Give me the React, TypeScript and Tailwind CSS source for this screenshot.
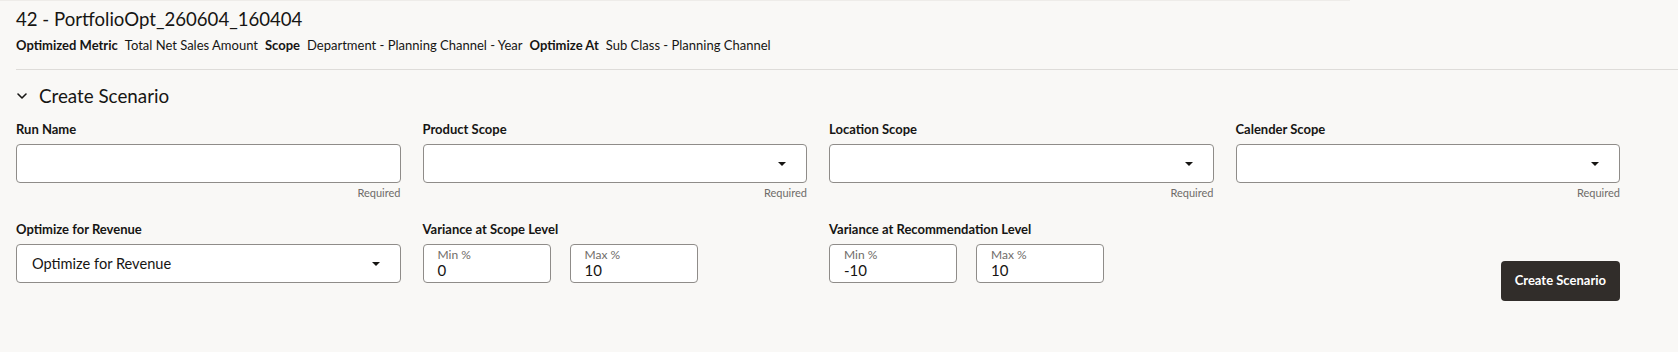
import React from "react";

function Caret() {
  return (
    <svg width="10" height="6" viewBox="0 0 10 6" className="shrink-0">
      <path d="M1 1 L9 1 L5 5 Z" fill="#161513" />
    </svg>
  );
}

function Chevron() {
  return (
    <svg width="12" height="8" viewBox="0 0 12 8" className="shrink-0">
      <path d="M2 2 L6 6 L10 2" fill="none" stroke="#161513" strokeWidth="1.6" strokeLinecap="round" strokeLinejoin="round" />
    </svg>
  );
}

function Label({ children }: { children: React.ReactNode }) {
  return <div className="text-[13px] leading-[16px] font-bold text-[#161513]">{children}</div>;
}

function TextField({ label, select }: { label: string; select?: boolean }) {
  return (
    <div className="flex flex-col">
      <Label>{label}</Label>
      <div className="mt-[7px] h-[39px] rounded-[4px] border border-[#8f8c89] bg-white flex items-center justify-end pr-[19px]">
        {select ? <Caret /> : null}
      </div>
      <div className="mt-[3px] text-right text-[11px] leading-[14px] text-[#6f6c69]">Required</div>
    </div>
  );
}

function RangeBox({ label, value }: { label: string; value: string }) {
  return (
    <div className="w-[128px] h-[39px] rounded-[4px] border border-[#8f8c89] bg-white pl-[14px] flex flex-col justify-center">
      <div className="text-[12px] leading-[14px] text-[#6f6c69]">{label}</div>
      <div className="text-[15px] leading-[17px] text-[#161513]">{value}</div>
    </div>
  );
}

export default function App() {
  return (
    <div className="min-h-[352px] w-full bg-[#f9f8f6] text-[#161513] font-['Lato',sans-serif] relative">
      <div className="absolute top-0 left-0 w-[1350px] h-px bg-[#eeece9]" />
      <div className="pl-4 pt-[7px]">
        <h1 className="text-[18.6px] leading-[24px] font-normal">42 - PortfolioOpt_260604_160404</h1>
        <div className="mt-[5px] text-[13px] leading-[18px] flex items-center">
          <span className="font-bold">Optimized Metric</span>
          <span className="ml-[7px]">Total Net Sales Amount</span>
          <span className="ml-[7px] font-bold">Scope</span>
          <span className="ml-[7px]">Department - Planning Channel - Year</span>
          <span className="ml-[7px] font-bold">Optimize At</span>
          <span className="ml-[7px]">Sub Class - Planning Channel</span>
        </div>
      </div>
      <div className="ml-4 mt-[15px] border-t border-[#dedcd9]" />
      <div className="pl-4 pr-[58px]">
        <div className="mt-[14px] h-[24px] flex items-center gap-[11px]">
          <Chevron />
          <span className="text-[18.8px] leading-[24px] font-normal">Create Scenario</span>
        </div>
        <div className="mt-[13px] grid grid-cols-4 gap-x-[22px]">
          <TextField label="Run Name" />
          <TextField label="Product Scope" select />
          <TextField label="Location Scope" select />
          <TextField label="Calender Scope" select />
        </div>
        <div className="mt-[21px] grid grid-cols-4 gap-x-[22px]">
          <div className="flex flex-col">
            <Label>Optimize for Revenue</Label>
            <div className="mt-[7px] h-[39px] rounded-[4px] border border-[#8f8c89] bg-white flex items-center justify-between pl-[15px] pr-[19px]">
              <span className="text-[14.6px] text-[#161513]">Optimize for Revenue</span>
              <Caret />
            </div>
          </div>
          <div className="flex flex-col">
            <Label>Variance at Scope Level</Label>
            <div className="mt-[7px] flex gap-[19px]">
              <RangeBox label="Min %" value="0" />
              <RangeBox label="Max %" value="10" />
            </div>
          </div>
          <div className="flex flex-col">
            <Label>Variance at Recommendation Level</Label>
            <div className="mt-[7px] flex gap-[19px]">
              <RangeBox label="Min %" value="-10" />
              <RangeBox label="Max %" value="10" />
            </div>
          </div>
          <div className="flex justify-end items-start">
            <button className="mt-[40px] h-[40px] px-[14px] rounded-[4px] bg-[#312d2a] text-white text-[13px] font-bold">
              Create Scenario
            </button>
          </div>
        </div>
      </div>
    </div>
  );
}
